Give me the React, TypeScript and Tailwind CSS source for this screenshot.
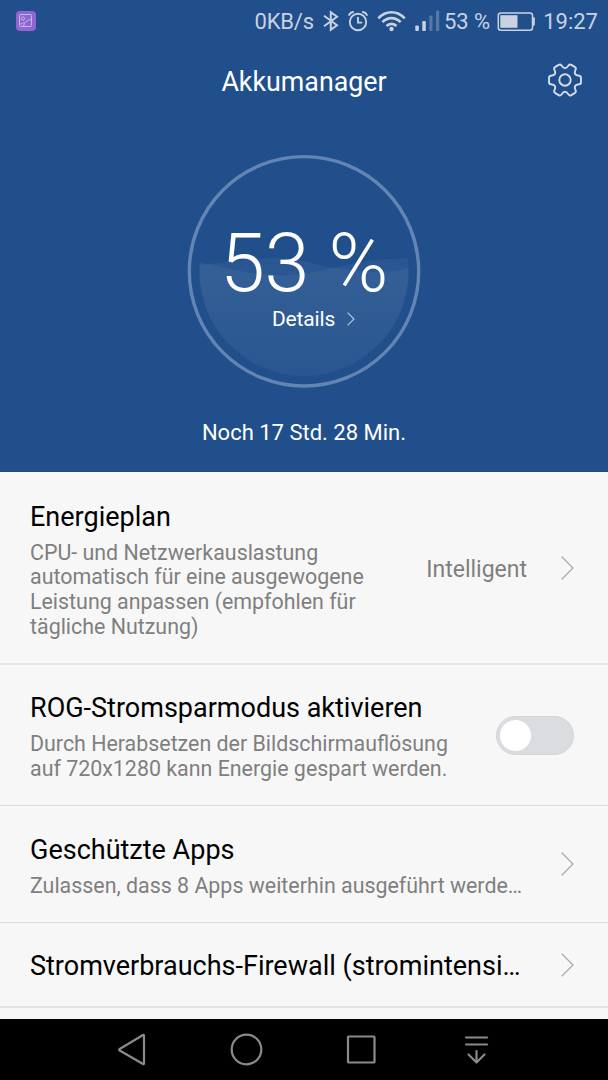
import React from 'react';
import clsx from 'clsx';

function GalleryIcon() {
  return (
    <svg width="20" height="20" viewBox="0 0 20 20" fill="none" stroke="#c3b8e6" strokeWidth="1">
      <rect x="0" y="0" width="20" height="20" rx="4" fill="#8f66d2" stroke="none" />
      <rect x="3.500" y="3.500" width="12" height="12" rx="0.800" />
      <circle cx="7" cy="7.500" r="1.600" />
      <path d="M7.500 15.500C8 11.500 11 9 15.500 8.500M4 13C6 13 7.500 12.300 8.500 11" />
    </svg>
  );
}

function BluetoothIcon() {
  return (
    <svg width="16" height="22" viewBox="0 0 16 22" fill="none" stroke="#c9d2e0" strokeWidth="2">
      <path d="M1 5.800 14 15.200 7.800 19.800V2.200L14 6.800 1 16.200" />
    </svg>
  );
}

function AlarmIcon() {
  return (
    <svg width="20" height="22" viewBox="0 0 20 22" fill="none" stroke="#c9d2e0" strokeWidth="1.900" strokeLinecap="round">
      <circle cx="10" cy="12" r="8.200" />
      <path d="M10 7.800V12.600H13.500M1.100 4.900C1.800 3.500 3.300 2.300 5.100 2M18.900 4.900C18.200 3.500 16.700 2.300 14.900 2" />
    </svg>
  );
}

function WifiIcon() {
  return (
    <svg width="29" height="22" viewBox="0 0 29 22" fill="none" stroke="#c9d2e0" strokeWidth="2.600">
      <path d="M1.300 8.300C8.800.2 20.200.2 27.700 8.300M5.400 12.200C10.600 6.700 18.400 6.700 23.600 12.200M9.500 16C12.300 13.100 16.700 13.100 19.500 16" />
      <circle cx="14.500" cy="19" r="2.200" fill="#c9d2e0" stroke="none" />
    </svg>
  );
}

function SignalIcon() {
  return (
    <svg width="25" height="22" viewBox="0 0 25 22" fill="#c9d2e0">
      <rect x="0.300" y="15.500" width="3.500" height="5.500" rx="0.800" />
      <rect x="7.300" y="11" width="3.500" height="10" rx="0.800" />
      <rect x="14.300" y="5.500" width="3.200" height="15.500" rx="0.800" fill="#5578a8" />
      <rect x="21" y="0.500" width="3.200" height="20.500" rx="0.800" fill="#5578a8" />
    </svg>
  );
}

function BatteryIcon() {
  return (
    <svg width="38" height="20" viewBox="0 0 38 20" fill="none">
      <rect x="1.300" y="0.900" width="34.200" height="17.400" rx="2.500" stroke="#c9d2e0" strokeWidth="1.500" />
      <rect x="3.300" y="3.200" width="17.200" height="12.600" fill="#c9d2e0" />
      <path d="M36 5.200h.8q1 0 1 1v6.500q0 1-1 1H36z" fill="#c9d2e0" />
    </svg>
  );
}

function GearIcon() {
  return (
    <svg width="34" height="34" viewBox="0 0 34 34" fill="none" stroke="#d5dce8" strokeWidth="1.900" strokeLinejoin="round">
      <path d="M13.500 2.500C14.800 4.400 15.700 5.200 17 5.200S19.200 4.400 20.500 2.500C21.200 1.500 22.300 1.300 23.300 1.900L26.700 3.900C27.800 4.500 28.100 5.500 27.600 6.600C26.700 8.700 26.500 9.900 27.100 11C27.700 12.100 28.800 12.500 31 12.700C32.200 12.800 33 13.600 33 14.800V19.200C33 20.400 32.200 21.200 31 21.300C28.800 21.500 27.700 21.900 27.100 23C26.500 24.100 26.700 25.300 27.600 27.400C28.100 28.500 27.800 29.500 26.700 30.100L23.300 32.100C22.300 32.700 21.200 32.500 20.500 31.500C19.200 29.600 18.300 28.800 17 28.800S14.800 29.600 13.500 31.500C12.800 32.500 11.700 32.700 10.700 32.100L7.300 30.100C6.200 29.500 5.900 28.500 6.400 27.400C7.300 25.300 7.500 24.100 6.900 23C6.300 21.900 5.200 21.500 3 21.300C1.800 21.200 1 20.400 1 19.200V14.800C1 13.600 1.800 12.800 3 12.700C5.200 12.500 6.300 12.100 6.900 11C7.500 9.900 7.300 8.700 6.400 6.600C5.900 5.500 6.200 4.500 7.300 3.900L10.700 1.900C11.700 1.300 12.800 1.500 13.500 2.500Z" />
      <circle cx="17" cy="17" r="5.700" />
    </svg>
  );
}

function Chevron() {
  return (
    <svg className="shrink-0" width="13" height="24" viewBox="0 0 13 24" fill="none" stroke="#a6a8ad" strokeWidth="1.200">
      <path d="M0.700 0.800 12 12 0.700 23.200" />
    </svg>
  );
}

function StatusBar() {
  return (
    <div className="flex h-[42px] items-center pl-4 pr-[10px] text-[22px] leading-none text-[#c9d2e0]">
      <div className="-mt-px"><GalleryIcon /></div>
      <div className="ml-auto flex items-center">
        <span className="pt-px tracking-[-0.2px]">0KB/s</span>
        <div className="ml-[9px] flex"><BluetoothIcon /></div>
        <div className="ml-[9px] flex"><AlarmIcon /></div>
        <div className="ml-[9px] flex"><WifiIcon /></div>
        <div className="ml-[9px] flex"><SignalIcon /></div>
        <span className="ml-[4px] pt-px">53 %</span>
        <div className="ml-[7px] flex pt-px"><BatteryIcon /></div>
        <span className="ml-[8px] pt-px">19:27</span>
      </div>
    </div>
  );
}

function BatteryGauge() {
  return (
    <div className="relative mx-auto h-[234px] w-[234px]">
      <svg className="absolute inset-0" width="234" height="234" viewBox="0 0 234 234" fill="none">
        <defs>
          <clipPath id="liquid">
            <circle cx="117" cy="117.300" r="104.600" />
          </clipPath>
          <linearGradient id="fade" x1="0" y1="104" x2="0" y2="222" gradientUnits="userSpaceOnUse">
            <stop offset="0" stopColor="#fff" stopOpacity="0.048" />
            <stop offset="1" stopColor="#fff" stopOpacity="0.022" />
          </linearGradient>
        </defs>
        <circle cx="117" cy="117.300" r="114.700" stroke="#6385b1" strokeWidth="3.400" />
        <g clipPath="url(#liquid)" fill="url(#fade)">
          <path d="M12 108C38 113 62 122 101 121C145 119 165 104 222 104.500V234H12Z" />
          <path d="M12 111C42 108 60 105 85 104.500C117 104 128 112 153 114.500C174 117 199 121 222 114V234H12Z" />
        </g>
      </svg>
      <div className="relative flex flex-col items-center text-white">
        <div className="mt-[69px] text-[81px] font-light leading-[82px] tracking-[-0.400px]">53 %</div>
        <div className="ml-[19px] mt-px flex items-center text-[21px] leading-[26px]">
          <span className="tracking-[-0.150px]">Details</span>
          <svg className="ml-3" width="8" height="14" viewBox="0 0 8 14" fill="none" stroke="#bccbe0" strokeWidth="1.100">
            <path d="M0.600 0.600 7 7 0.600 13.400" />
          </svg>
        </div>
      </div>
    </div>
  );
}

type RowProps = {
  title: string;
  text?: string;
  className?: string;
  textClassName?: string;
  children: React.ReactNode;
};

function SettingRow({ title, text, className, textClassName, children }: RowProps) {
  return (
    <div className={clsx('flex items-center pl-[30px] pr-[34px]', className)}>
      <div className={clsx('min-w-0', textClassName)}>
        <h2 className="truncate text-[27px] leading-[32px] text-black">{title}</h2>
        {text && <p className="mt-[8px] text-[21.400px] leading-[24.700px] text-[#7f7f7f]">{text}</p>}
      </div>
      <div className="ml-auto flex items-center">{children}</div>
    </div>
  );
}

function NavBar() {
  return (
    <nav className="flex h-[61px] items-center bg-black pl-[117px]">
      <svg width="374" height="34" viewBox="0 0 374 34" fill="none" stroke="#8a8a8a" strokeWidth="2.200" strokeLinejoin="round" strokeLinecap="round">
        <path d="M27 2.500V30.500Q27 31.500 26 31L2.700 17.500Q1.600 16.700 2.700 16L26 2Q27 1.500 27 2.500Z" />
        <circle cx="129.500" cy="16.500" r="14.800" />
        <rect x="231" y="3.500" width="26.500" height="26" rx="0.800" />
        <path d="M349 4.500H370M349 11.500H370M359.500 18V29M351.500 21.500 359.500 29.500 367.500 21.500" />
      </svg>
    </nav>
  );
}

export default function App() {
  return (
    <div className="flex h-[1080px] w-[608px] flex-col overflow-hidden bg-[#f7f7f7] font-['Roboto',sans-serif]">
      <header className="h-[472px] shrink-0 border-b border-[#234878] bg-[#204f8c]">
        <StatusBar />
        <div className="relative flex h-[78px] items-center justify-center text-white">
          <h1 className="pt-[2px] text-[26.800px] leading-[32px]">Akkumanager</h1>
          <button className="absolute right-[26px] top-[21px]" aria-label="Einstellungen">
            <GearIcon />
          </button>
        </div>
        <div className="pt-[34px]">
          <BatteryGauge />
        </div>
        <p className="mt-[32px] text-center text-[22px] leading-[26px] text-white">Noch 17 Std. 28 Min.</p>
      </header>

      <main className="flex-1">
        <SettingRow
          title="Energieplan"
          text="CPU- und Netzwerkauslastung automatisch für eine ausgewogene Leistung anpassen (empfohlen für tägliche Nutzung)"
          className="h-[193px] border-b-2 border-[#e6e6e6]"
          textClassName="w-[345px] pt-[5px]"
        >
          <span className="mr-[34px] pt-[5px] text-[23px] text-[#7f7f7f]">Intelligent</span>
          <Chevron />
        </SettingRow>
        <SettingRow
          title="ROG-Stromsparmodus aktivieren"
          text="Durch Herabsetzen der Bildschirmauflösung auf 720x1280 kann Energie gespart werden."
          className="h-[141px] border-b border-[#dcdcdc]"
          textClassName="w-[430px] pt-[4px]"
        >
          <button className="flex h-[39px] w-[78px] items-center rounded-full border border-[#d3d6d9] bg-[#dadce0] pl-[3px]" role="switch" aria-checked={false}>
            <span className="h-[31px] w-[31px] rounded-full bg-white" />
          </button>
        </SettingRow>
        <SettingRow
          title="Geschützte Apps"
          text="Zulassen, dass 8 Apps weiterhin ausgeführt werde…"
          className="h-[117px] border-b border-[#dcdcdc]"
          textClassName="pt-[4px]"
        >
          <Chevron />
        </SettingRow>
        <SettingRow
          title="Stromverbrauchs-Firewall (stromintensi…"
          className="h-[85px] border-b-2 border-[#e3e3e3]"
          textClassName="pt-[3px]"
        >
          <Chevron />
        </SettingRow>
      </main>

      <NavBar />
    </div>
  );
}
